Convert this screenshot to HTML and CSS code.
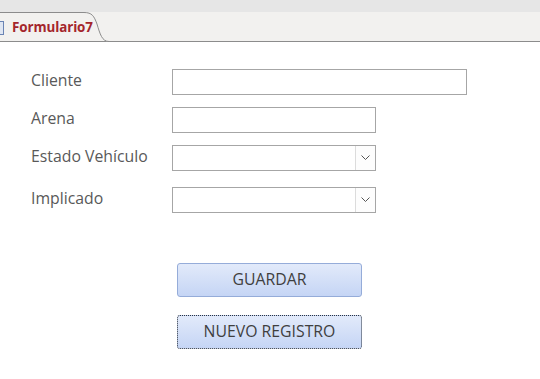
FILE: index.html
```html
<!DOCTYPE html>
<html lang="es">
<head>
<meta charset="utf-8">
<title>Formulario7</title>
<link rel="stylesheet" href="styles.css">
</head>
<body>
<div class="topstrip"></div>
<div class="tabbar">
  <div class="tab">
    <svg class="tab-shape" width="110" height="30" viewBox="0 0 110 30">
      <path d="M0 0.5 H84 C92 0.5 94 4 97 12 C100 22 102 29.5 109 29.5" fill="#f2f1ef" stroke="#8c8c8c" stroke-width="1"/>
    </svg>
    <span class="tab-icon"></span>
    <span class="tab-label">Formulario7</span>
  </div>
</div>
<main class="form">
  <div class="row r1">
    <label class="lbl">Cliente</label>
    <div class="field w-long"></div>
  </div>
  <div class="row r2">
    <label class="lbl">Arena</label>
    <div class="field w-short"></div>
  </div>
  <div class="row r3">
    <label class="lbl">Estado Vehículo</label>
    <div class="field w-short combo"><span class="drop"><svg width="9" height="6" viewBox="0 0 9 6"><path d="M0.5 0.5 L4.5 4.5 L8.5 0.5" fill="none" stroke="#555" stroke-width="1"/></svg></span></div>
  </div>
  <div class="row r4">
    <label class="lbl">Implicado</label>
    <div class="field w-short combo"><span class="drop"><svg width="9" height="6" viewBox="0 0 9 6"><path d="M0.5 0.5 L4.5 4.5 L8.5 0.5" fill="none" stroke="#555" stroke-width="1"/></svg></span></div>
  </div>
  <div class="buttons">
    <button class="btn">GUARDAR</button>
    <button class="btn focus">NUEVO REGISTRO</button>
  </div>
</main>
</body>
</html>
```
FILE: styles.css
```css
html, body {
  margin: 0;
  padding: 0;
  background: #ffffff;
  font-family: "Open Sans", "Noto Sans", sans-serif;
}
.topstrip {
  height: 12px;
  background: #e6e6e6;
}
.tabbar {
  height: 29px;
  background: #f2f1ef;
  border-bottom: 1px solid #8c8c8c;
  position: relative;
}
.tab {
  position: relative;
  width: 105px;
  height: 29px;
  display: flex;
  align-items: center;
}
.tab-shape {
  position: absolute;
  left: 0;
  top: 0;
  overflow: visible;
}
.tab-icon {
  position: relative;
  width: 3px;
  height: 12px;
  margin-top: 2px;
  border: 1px solid #6a84b4;
  border-left: none;
  background: #dfe6f2;
}
.tab-label {
  position: relative;
  margin-left: 8px;
  margin-top: 1px;
  font-family: "Open Sans", sans-serif;
  font-weight: 700;
  font-size: 13.4px;
  color: #a4262c;
  letter-spacing: -0.1px;
}
.form {
  padding: 27px 0 0 31px;
}
.row {
  display: flex;
  align-items: center;
}
.r2, .r3 { margin-top: 12px; }
.r4 { margin-top: 16px; }
.lbl {
  width: 141px;
  font-size: 15.8px;
  line-height: 20px;
  margin-top: -4px;
  color: #595959;
}
.field {
  height: 26px;
  box-sizing: border-box;
  border: 1px solid #a6a6a6;
  background: #fff;
  position: relative;
}
.w-long { width: 295px; }
.w-short { width: 204px; }
.combo {
  display: flex;
  justify-content: flex-end;
}
.drop {
  width: 20px;
  height: 24px;
  box-sizing: border-box;
  border-left: 1px solid #dcdcdc;
  background: #fdfdfd;
  display: flex;
  align-items: center;
  justify-content: center;
}
.buttons {
  display: flex;
  flex-direction: column;
  gap: 18px;
  margin-top: 50px;
  margin-left: 146px;
}
.btn {
  width: 185px;
  height: 34px;
  box-sizing: border-box;
  border: 1px solid #95acd9;
  border-radius: 3px;
  background: linear-gradient(#e2eafa, #c5d5f5);
  font-family: "Open Sans", sans-serif;
  font-size: 15.8px;
  color: #3f3f3f;
  padding: 0 0 3px 0;
}
.btn.focus {
  border: 1px dotted #2c3440;
}
```
